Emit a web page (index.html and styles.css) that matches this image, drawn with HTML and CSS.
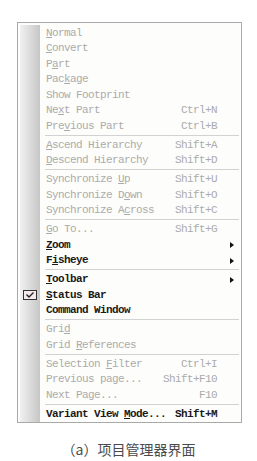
FILE: index.html
```html
<!DOCTYPE html>
<html>
<head>
  <title>Menu</title>
  <link rel="stylesheet" href="styles.css">
</head>
<body>
  <div class="menu">
    <ul class="items">
      <li class="off"><span class="label"><u>N</u>ormal</span></li>
      <li class="off"><span class="label"><u>C</u>onvert</span></li>
      <li class="off"><span class="label">P<u>a</u>rt</span></li>
      <li class="off"><span class="label">Pac<u>k</u>age</span></li>
      <li class="off"><span class="label">Show Footprint</span></li>
      <li class="off"><span class="label">Ne<u>x</u>t Part</span><span class="key">Ctrl+N</span></li>
      <li class="off"><span class="label">Pre<u>v</u>ious Part</span><span class="key">Ctrl+B</span></li>
      <li class="sep"></li>
      <li class="off"><span class="label"><u>A</u>scend Hierarchy</span><span class="key">Shift+A</span></li>
      <li class="off"><span class="label"><u>D</u>escend Hierarchy</span><span class="key">Shift+D</span></li>
      <li class="sep"></li>
      <li class="off"><span class="label">Synchronize <u>U</u>p</span><span class="key">Shift+U</span></li>
      <li class="off"><span class="label">Synchronize D<u>o</u>wn</span><span class="key">Shift+O</span></li>
      <li class="off"><span class="label">Synchronize A<u>c</u>ross</span><span class="key">Shift+C</span></li>
      <li class="sep"></li>
      <li class="off"><span class="label"><u>G</u>o To...</span><span class="key">Shift+G</span></li>
      <li><span class="label"><u>Z</u>oom</span><span class="arrow"></span></li>
      <li><span class="label">F<u>i</u>sheye</span><span class="arrow"></span></li>
      <li class="sep"></li>
      <li><span class="label"><u>T</u>oolbar</span><span class="arrow"></span></li>
      <li><span class="check"><svg width="8" height="6" viewBox="0 0 8 6"><path d="M0.5 2.5 L3 5 L7.5 0.5" fill="none" stroke="#222" stroke-width="1.4"/></svg></span><span class="label"><u>S</u>tatus Bar</span></li>
      <li><span class="label">Command Window</span></li>
      <li class="sep"></li>
      <li class="off"><span class="label">Gri<u>d</u></span></li>
      <li class="off"><span class="label">Grid <u>R</u>eferences</span></li>
      <li class="sep"></li>
      <li class="off"><span class="label">Selection <u>F</u>ilter</span><span class="key">Ctrl+I</span></li>
      <li class="off"><span class="label">Previous page...</span><span class="key">Shift+F10</span></li>
      <li class="off"><span class="label">Next Page...</span><span class="key">F10</span></li>
      <li class="sep"></li>
      <li><span class="label">Variant View <u>M</u>ode...</span><span class="key">Shift+M</span></li>
    </ul>
  </div>
  <p class="caption">（a）项目管理器界面</p>
</body>
</html>
```
FILE: styles.css
```css
body {
  margin: 0;
  background: #fff;
  font-family: "Liberation Mono", monospace;
}
.menu {
  margin: 22px 0 0 17px;
  width: 219px;
  border: 1px solid #a9a9a9;
  padding: 2px 2px 0 2px;
  background: #fdfdfb;
}
.items {
  list-style: none;
  margin: 0;
  padding: 0;
  background: linear-gradient(to right, #f1f1f1, #c6c6c6) no-repeat 0 0 / 20px 100%;
}
.items li {
  position: relative;
  display: flex;
  align-items: center;
  height: 15.5px;
  padding: 0 22px 0 26px;
  font-size: 11px;
  letter-spacing: -0.6px;
  color: #1a1a1a;
  font-weight: bold;
}
.items li.off {
  color: #ababab;
  font-weight: normal;
}
.items li.sep {
  height: 3.5px;
  padding: 0;
  margin-left: 25px;
  background: linear-gradient(#d2d2d2, #d2d2d2) no-repeat 0 1px / 100% 1px;
}
.label {
  flex: 1;
  white-space: nowrap;
}
.key {
  white-space: nowrap;
}
u {
  text-decoration-thickness: 1px;
  text-underline-offset: 1px;
}
.arrow {
  position: absolute;
  right: 5px;
  top: 5px;
  width: 0;
  height: 0;
  border-top: 3px solid transparent;
  border-bottom: 3px solid transparent;
  border-left: 4px solid #111;
}
.check {
  position: absolute;
  left: 3px;
  top: 3px;
  width: 12px;
  height: 8px;
  border: 1px solid #333;
  background: #f4e9ed;
  display: flex;
  align-items: center;
  justify-content: center;
}
.caption {
  margin: 16px 0 0 0;
  text-align: center;
  font-family: "Noto Sans CJK SC", sans-serif;
  font-size: 14px;
  color: #4a4a4a;
}
```
